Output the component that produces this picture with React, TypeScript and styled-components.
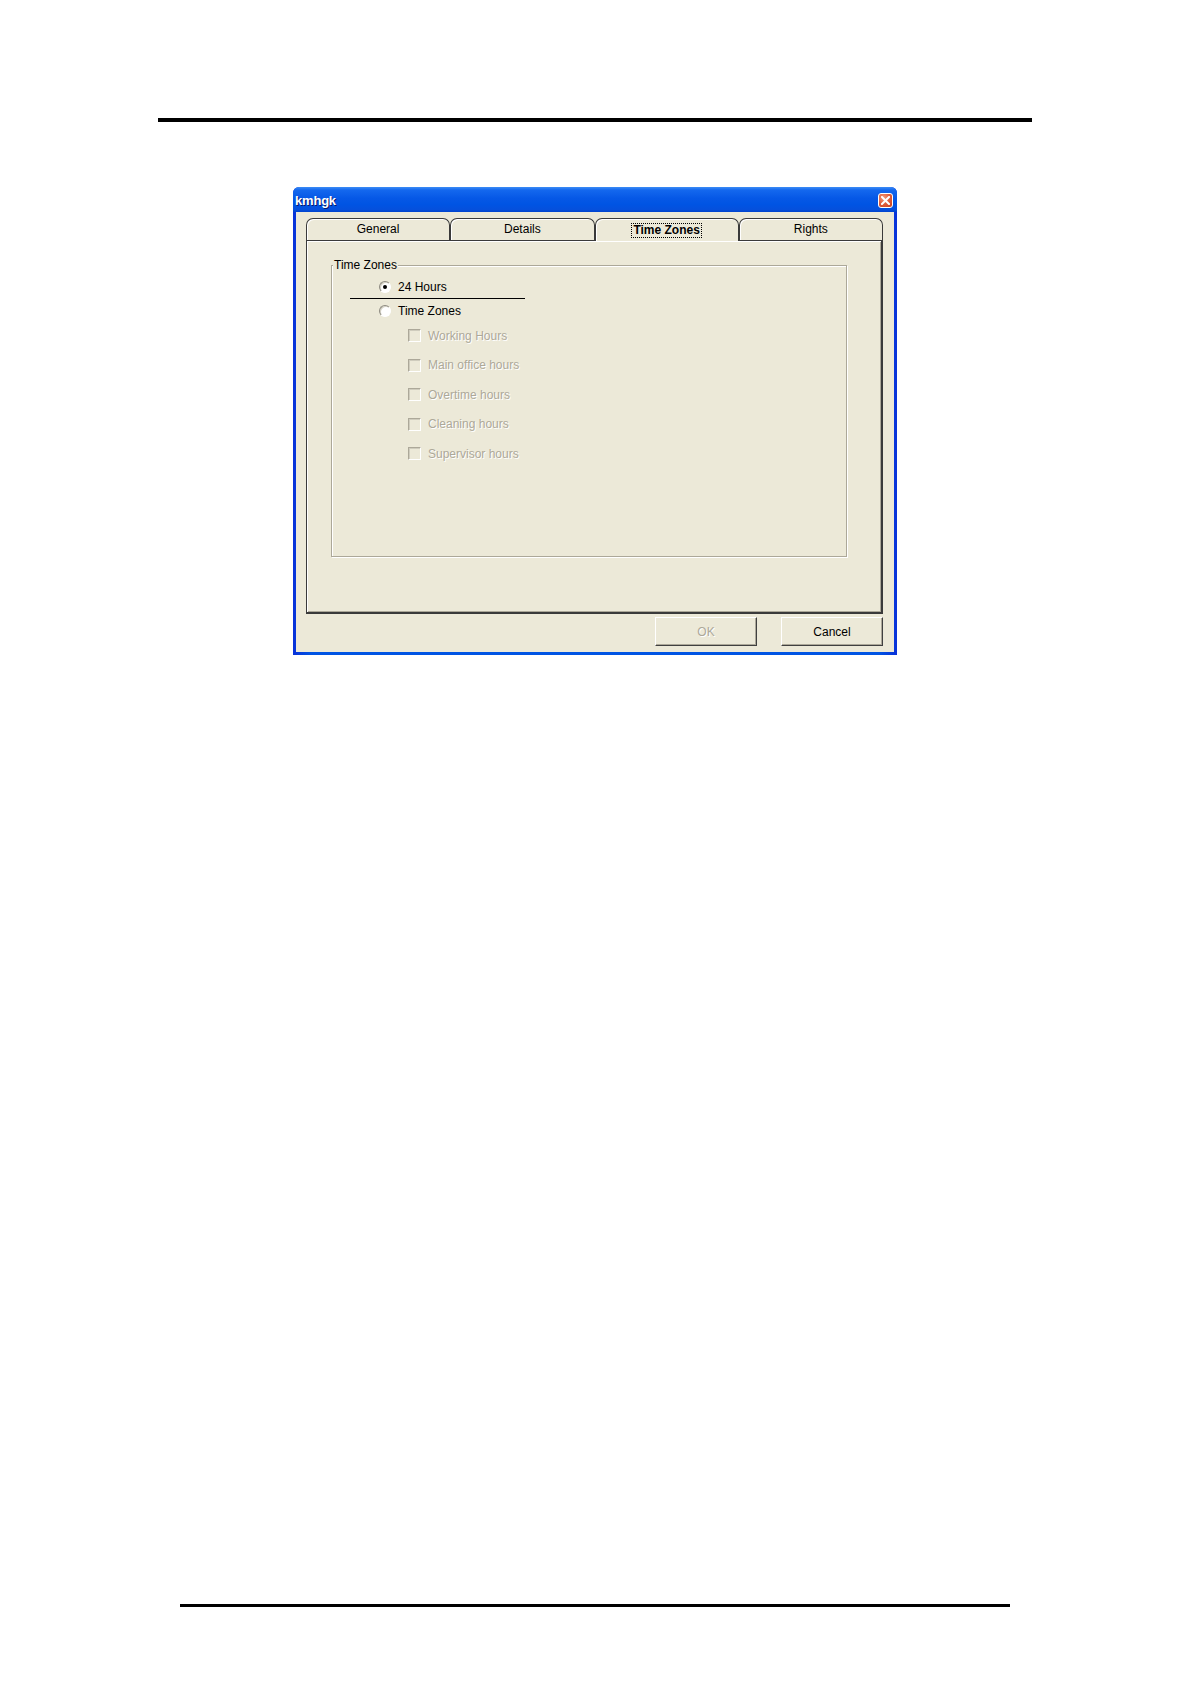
import styled, { createGlobalStyle } from 'styled-components';

const GlobalStyle = createGlobalStyle`
  html, body {
    margin: 0;
    padding: 0;
    background: #ffffff;
  }
  body {
    font-family: 'Liberation Sans', Arial, sans-serif;
    font-size: 12px;
  }
`;

const Page = styled.div`
  width: 1190px;
  height: 1684px;
  display: flex;
  flex-direction: column;
  box-sizing: border-box;
  padding-top: 118px;
`;

const Rule = styled.div<{ $left: number; $width: number; $thick: number; $top: number }>`
  margin-top: ${(p) => p.$top}px;
  margin-left: ${(p) => p.$left}px;
  width: ${(p) => p.$width}px;
  height: ${(p) => p.$thick}px;
  background: #000;
`;

const Frame = styled.div`
  margin-top: 65px;
  margin-left: 293px;
  width: 604px;
  box-sizing: border-box;
  padding: 0 3px 3px;
  background: linear-gradient(90deg, #0831d9 0%, #0054e3 3%, #0054e3 97%, #0831d9 100%);
  border-radius: 6px 6px 0 0;
`;

const TitleBar = styled.div`
  height: 25px;
  display: flex;
  align-items: center;
  margin: 0 -3px;
  padding: 1px 4px 0 2px;
  box-sizing: border-box;
  border-radius: 6px 6px 0 0;
  background: linear-gradient(
    180deg,
    #3d8cf5 0%,
    #1468ee 12%,
    #0658e6 45%,
    #0054e3 70%,
    #0550dc 90%,
    #0043cf 100%
  );
`;

const Title = styled.span`
  flex: 1;
  color: #fff;
  font-weight: bold;
  font-size: 13px;
  letter-spacing: -0.2px;
  text-shadow: 1px 1px 0 #0a1a6a;
`;

const CloseButton = styled.div`
  width: 15px;
  height: 15px;
  box-sizing: border-box;
  border: 1px solid #fff;
  border-radius: 3px;
  background: radial-gradient(circle at 35% 30%, #f29b7e 0%, #e2613f 45%, #c8401e 100%);
  display: flex;
  align-items: center;
  justify-content: center;
`;

const Body = styled.div`
  background: #ece9d8;
  padding: 6px 11px 6px 10px;
  display: flex;
  flex-direction: column;
`;

const TabStrip = styled.div`
  display: flex;
  align-items: flex-end;
  height: 22px;
`;

const Tab = styled.div<{ $active?: boolean }>`
  flex: 1;
  position: relative;
  z-index: ${(p) => (p.$active ? 2 : 1)};
  height: ${(p) => (p.$active ? 23 : 22)}px;
  margin-bottom: ${(p) => (p.$active ? -1 : 0)}px;
  box-sizing: border-box;
  border: 1px solid #3a3a3a;
  border-bottom: none;
  border-radius: 7px 7px 0 0;
  background: #ece9d8;
  box-shadow: inset 1px 1px 0 #ffffff;
  display: flex;
  justify-content: center;
  padding-top: ${(p) => (p.$active ? 5 : 3)}px;
  color: #000;
  font-size: 12px;
  line-height: 14px;
`;

const FocusLabel = styled.span`
  font-weight: bold;
  outline: 1px dotted #000;
  padding: 0 1px;
  line-height: 13px;
  height: 13px;
`;

const Panel = styled.div`
  height: 374px;
  box-sizing: border-box;
  border: 1px solid #3a3a3a;
  border-right-width: 2px;
  border-bottom-width: 2px;
  box-shadow: inset 1px 1px 0 #ffffff, inset -1px -1px 0 #aca899;
  padding: 24px 0 0 24px;
`;

const Group = styled.div`
  width: 516px;
  height: 292px;
  box-sizing: border-box;
  border: 1px solid #aca899;
  box-shadow: inset 1px 1px 0 #ffffff, 1px 1px 0 #ffffff;
  display: flex;
  flex-direction: column;
`;

const Legend = styled.span`
  align-self: flex-start;
  margin: -8px 0 0 1px;
  padding: 0 1px;
  height: 14px;
  line-height: 14px;
  background: #ece9d8;
  color: #000;
`;

const OptionRow = styled.label<{ $indent: number; $height: number; $top?: number }>`
  display: flex;
  align-items: center;
  gap: 7px;
  height: ${(p) => p.$height}px;
  margin-top: ${(p) => p.$top ?? 0}px;
  padding-left: ${(p) => p.$indent}px;
  line-height: 14px;
`;

const OptionText = styled.span<{ $disabled?: boolean }>`
  color: ${(p) => (p.$disabled ? '#aca899' : '#000')};
  text-shadow: ${(p) => (p.$disabled ? '1px 1px 0 #ffffff' : 'none')};
`;

const RadioCircle = styled.span<{ $checked?: boolean }>`
  width: 12px;
  height: 12px;
  box-sizing: border-box;
  border-radius: 50%;
  border: 1px solid;
  border-color: #8d8a7f #ffffff #ffffff #8d8a7f;
  background: #ffffff;
  box-shadow: inset 1px 1px 0 #d6d3c6;
  display: flex;
  align-items: center;
  justify-content: center;

  &::after {
    content: '';
    width: 4px;
    height: 4px;
    border-radius: 50%;
    background: ${(p) => (p.$checked ? '#000' : 'transparent')};
  }
`;

const CheckBox = styled.span`
  width: 13px;
  height: 13px;
  box-sizing: border-box;
  border: 1px solid;
  border-color: #aca899 #ffffff #ffffff #aca899;
  box-shadow: inset 1px 1px 0 #cfccbd;
  background: #ece9d8;
`;

const Divider = styled.div`
  margin: 1px 0 0 18px;
  width: 175px;
  height: 1px;
  background: #000;
`;

const CheckList = styled.div`
  display: flex;
  flex-direction: column;
`;

const ButtonRow = styled.div`
  display: flex;
  justify-content: flex-end;
  gap: 24px;
  margin-top: 3px;
`;

const Button = styled.button<{ $disabled?: boolean }>`
  width: 102px;
  height: 29px;
  box-sizing: border-box;
  background: #ece9d8;
  border: 1px solid;
  border-color: #ffffff #404040 #404040 #ffffff;
  box-shadow: inset -1px -1px 0 #aca899;
  font-family: 'Liberation Sans', Arial, sans-serif;
  font-size: 12px;
  color: ${(p) => (p.$disabled ? '#aca899' : '#000')};
  text-shadow: ${(p) => (p.$disabled ? '1px 1px 0 #ffffff' : 'none')};
  padding: 0;
`;

const checkItems = [
  'Working Hours',
  'Main office hours',
  'Overtime hours',
  'Cleaning hours',
  'Supervisor hours',
];

const tabs = ['General', 'Details', 'Time Zones', 'Rights'];

export default function App() {
  return (
    <>
      <GlobalStyle />
      <Page>
        <Rule $top={0} $left={158} $width={874} $thick={4} />
        <Frame>
          <TitleBar>
            <Title>kmhgk</Title>
            <CloseButton>
              <svg width="9" height="9" viewBox="0 0 9 9">
                <path d="M1 1 L8 8 M8 1 L1 8" stroke="#fff" strokeWidth="2" strokeLinecap="square" />
              </svg>
            </CloseButton>
          </TitleBar>
          <Body>
            <TabStrip>
              {tabs.map((t) => (
                <Tab key={t} $active={t === 'Time Zones'}>
                  {t === 'Time Zones' ? <FocusLabel>{t}</FocusLabel> : t}
                </Tab>
              ))}
            </TabStrip>
            <Panel>
              <Group>
                <Legend>Time Zones</Legend>
                <OptionRow $indent={47} $height={20} $top={5}>
                  <RadioCircle $checked />
                  <OptionText>24 Hours</OptionText>
                </OptionRow>
                <Divider />
                <OptionRow $indent={47} $height={20} $top={2}>
                  <RadioCircle />
                  <OptionText>Time Zones</OptionText>
                </OptionRow>
                <CheckList>
                  {checkItems.map((item) => (
                    <OptionRow key={item} $indent={76} $height={29.5}>
                      <CheckBox />
                      <OptionText $disabled>{item}</OptionText>
                    </OptionRow>
                  ))}
                </CheckList>
              </Group>
            </Panel>
            <ButtonRow>
              <Button $disabled disabled>
                OK
              </Button>
              <Button>Cancel</Button>
            </ButtonRow>
          </Body>
        </Frame>
        <Rule $top={949} $left={180} $width={830} $thick={3} />
      </Page>
    </>
  );
}
